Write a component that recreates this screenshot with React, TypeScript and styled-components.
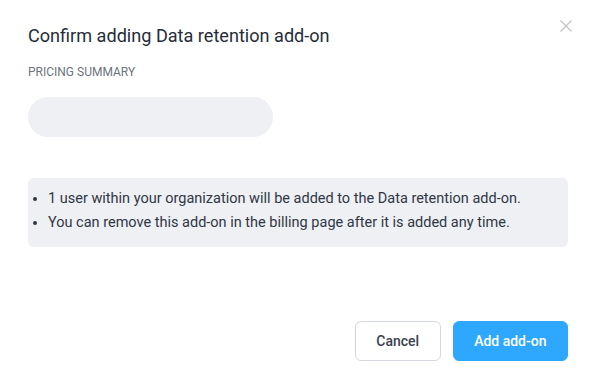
import React from "react";
import styled, { createGlobalStyle } from "styled-components";

const Global = createGlobalStyle`
  html, body { margin: 0; padding: 0; background: #fff; }
  body { font-family: Roboto, "Noto Sans", sans-serif; }
  * { box-sizing: border-box; }
`;

const Dialog = styled.div`
  position: relative;
  width: 591px;
  height: 376px;
  background: #fff;
  padding: 24px 23px 15px 28px;
  display: flex;
  flex-direction: column;
`;

const Title = styled.h2`
  margin: 0;
  font-size: 18.1px;
  font-weight: 400;
  line-height: 24px;
  color: #262d38;
`;

const Close = styled.button`
  position: absolute;
  top: 19px;
  right: 18px;
  width: 14px;
  height: 14px;
  padding: 0;
  border: 0;
  background: none;
  cursor: pointer;
  display: flex;
`;

const SectionLabel = styled.div`
  margin-top: 17px;
  font-size: 12px;
  line-height: 15px;
  color: #6e737b;
  text-transform: uppercase;
`;

const Skeleton = styled.div`
  margin-top: 17px;
  width: 245px;
  height: 40px;
  border-radius: 20px;
  background: #eff0f4;
`;

const InfoBox = styled.div`
  margin-top: 41px;
  width: 540px;
  height: 69px;
  border-radius: 6px;
  background: #eff0f4;
  padding: 9px 0;
`;

const List = styled.ul`
  margin: 0;
  padding-left: 20px;
  font-size: 14.5px;
  line-height: 24px;
  color: #2f3744;
`;

const Footer = styled.div`
  margin-top: auto;
  display: flex;
  justify-content: flex-end;
  gap: 12px;
`;

const Button = styled.button<{ $primary?: boolean }>`
  height: 40px;
  padding: 0 20.5px;
  border-radius: 6px;
  font-family: Roboto, sans-serif;
  font-size: 14px;
  font-weight: 500;
  cursor: pointer;
  border: 1px solid ${(p) => (p.$primary ? "#2ea8ff" : "#d3d8e2")};
  background: ${(p) => (p.$primary ? "#2ea8ff" : "#fff")};
  color: ${(p) => (p.$primary ? "#fff" : "#3a4250")};
`;

export default function App() {
  return (
    <>
      <Global />
      <Dialog>
        <Close aria-label="Close">
          <svg width="14" height="14" viewBox="0 0 14 14">
            <path d="M1.5 1.5 L12.5 12.5 M12.5 1.5 L1.5 12.5" stroke="#c4c4c4" strokeWidth="1.3" fill="none" />
          </svg>
        </Close>
        <Title>Confirm adding Data retention add-on</Title>
        <SectionLabel>Pricing summary</SectionLabel>
        <Skeleton />
        <InfoBox>
          <List>
            <li>1 user within your organization will be added to the Data retention add-on.</li>
            <li>You can remove this add-on in the billing page after it is added any time.</li>
          </List>
        </InfoBox>
        <Footer>
          <Button>Cancel</Button>
          <Button $primary>Add add-on</Button>
        </Footer>
      </Dialog>
    </>
  );
}
